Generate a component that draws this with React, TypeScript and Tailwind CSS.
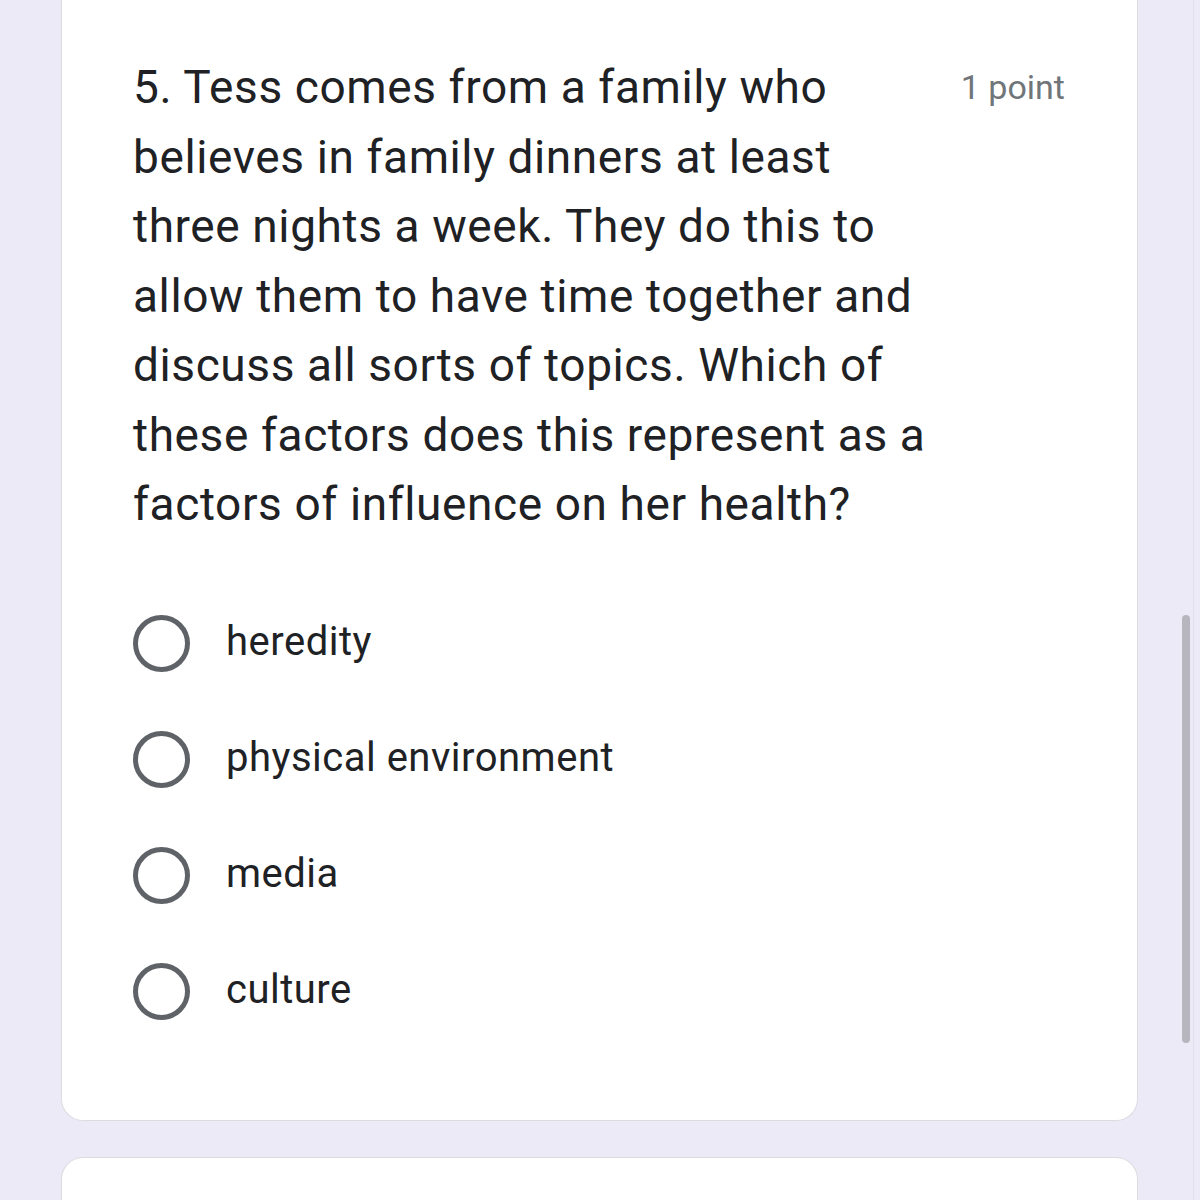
const options = ["heredity", "physical environment", "media", "culture"];

const questionLines = [
  "5. Tess comes from a family who",
  "believes in family dinners at least",
  "three nights a week. They do this to",
  "allow them to have time together and",
  "discuss all sorts of topics. Which of",
  "these factors does this represent as a",
  "factors of influence on her health?",
];

function RadioOption({ label }: { label: string }) {
  return (
    <div className="flex items-center h-[116px]">
      <div className="w-[57px] h-[57px] rounded-full border-[5px] border-[#5f6368] shrink-0" />
      <span className="ml-[36px] text-[40px] tracking-[0.5px] text-[#202124] leading-none pb-[4px]">{label}</span>
    </div>
  );
}

export default function App() {
  return (
    <div
      className="relative w-[1200px] h-[1200px] overflow-hidden bg-[#edeaf8] pl-[61px] pr-[62px] flex flex-col gap-[36px]"
      style={{ fontFamily: "Roboto, 'Noto Sans', sans-serif" }}
    >
      {/* question card, top runs off screen */}
      <div className="bg-white border border-t-0 border-[#dadce0] rounded-b-[22px] pl-[71px] pr-[72px] pt-[53px] pb-[70px] shrink-0">
        <div className="flex justify-between">
          <p className="text-[46px] leading-[69.5px] tracking-[0.6px] text-[#202124]">
            {questionLines.map((line) => (
              <span key={line} className="block whitespace-nowrap">
                {line}
              </span>
            ))}
          </p>
          <span className="text-[34px] text-[#70757a] leading-[69.5px] whitespace-nowrap">1 point</span>
        </div>
        <div className="mt-[46px] flex flex-col">
          {options.map((o) => (
            <RadioOption key={o} label={o} />
          ))}
        </div>
      </div>

      {/* next card peeking in */}
      <div className="bg-white border border-b-0 border-[#dadce0] rounded-t-[22px] h-[200px] shrink-0" />

      {/* scrollbar */}
      <div className="absolute left-[1182px] top-[615px] w-[8px] h-[428px] rounded-full bg-[#b7b5be]" />
      <div className="absolute left-[1193px] top-0 w-[1px] h-full bg-[#e2dfea]" />
    </div>
  );
}
